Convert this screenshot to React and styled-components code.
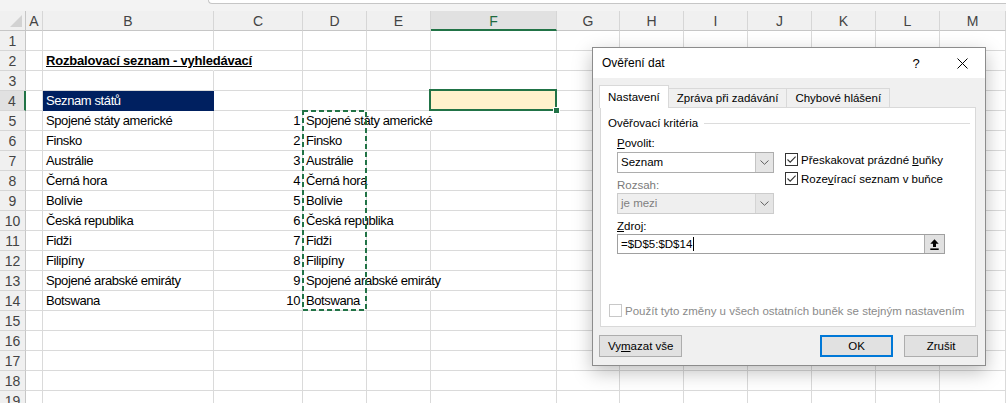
import React from 'react'
import styled, { createGlobalStyle } from 'styled-components'

const widths = [26, 17, 171, 89, 64, 64, 126, 63, 64, 64, 64, 64, 64, 66]
const letters = ['A', 'B', 'C', 'D', 'E', 'F', 'G', 'H', 'I', 'J', 'K', 'L', 'M']

const countries = [
  'Spojené státy americké',
  'Finsko',
  'Austrálie',
  'Černá hora',
  'Bolívie',
  'Česká republika',
  'Fidži',
  'Filipíny',
  'Spojené arabské emiráty',
  'Botswana',
]

// how many gridlines the text in column D runs across
const overD = [2, 0, 0, 1, 0, 1, 0, 0, 2, 0]

const GlobalStyle = createGlobalStyle`
  html, body {
    margin: 0;
    padding: 0;
    background: #ffffff;
    overflow: hidden;
  }
  body {
    font-family: "Liberation Sans", Arial, sans-serif;
  }
`

const Screen = styled.div`
  position: relative;
  width: 1006px;
  height: 403px;
  overflow: hidden;
  background: #fff;
`

const TopStrip = styled.div`
  display: flex;
  height: 11px;
  background: #f3f3f3;
`

const FormulaEdge = styled.div`
  flex: 1;
  margin-left: 208px;
  height: 3px;
  background: #fff;
  border-left: 1px solid #c6c6c6;
  border-bottom: 1px solid #c6c6c6;
  border-bottom-left-radius: 5px;
`

const Sheet = styled.div`
  display: grid;
  grid-template-columns: ${widths.map(w => `${w}px`).join(' ')};
  grid-auto-rows: 20px;
  font-family: "Liberation Sans", Arial, sans-serif;
  font-size: 13px;
  letter-spacing: -0.4px;
`

const Corner = styled.div`
  position: relative;
  box-sizing: border-box;
  background: #f0f0f0;
  border-right: 1px solid #c6c6c6;
  border-bottom: 1px solid #c6c6c6;

  &::after {
    content: '';
    position: absolute;
    right: 3px;
    bottom: 3px;
    border-style: solid;
    border-width: 0 0 12px 12px;
    border-color: transparent transparent #d2d2d2 transparent;
  }
`

const ColHead = styled.div`
  box-sizing: border-box;
  display: flex;
  align-items: center;
  justify-content: center;
  padding-top: 1px;
  font-size: 14px;
  letter-spacing: 0;
  background: ${p => (p.$active ? '#e1e1e1' : '#f0f0f0')};
  color: ${p => (p.$active ? '#1e6b3f' : '#444')};
  border-right: 1px solid #d6d6d6;
  border-bottom: ${p => (p.$active ? '2px solid #217346' : '1px solid #c6c6c6')};
`

const RowHead = styled.div`
  box-sizing: border-box;
  display: flex;
  align-items: center;
  justify-content: center;
  font-size: 14px;
  letter-spacing: 0;
  background: ${p => (p.$active ? '#e1e1e1' : '#f0f0f0')};
  color: #444;
  border-bottom: 1px solid #d6d6d6;
  border-right: ${p => (p.$active ? '2px solid #217346' : '1px solid #c6c6c6')};
`

const Cell = styled.div`
  position: relative;
  box-sizing: border-box;
  padding: 0 ${p => (p.$align === 'right' ? '2px' : '3px')};
  background: ${p => p.$fill || 'transparent'};
  color: ${p => p.$ink || '#000'};
  border-right: 1px solid ${p => p.$fill || (p.$open ? 'transparent' : '#dadada')};
  border-bottom: 1px solid ${p => p.$fill || '#dadada'};
  text-align: ${p => p.$align || 'left'};
  line-height: 20px;
  white-space: nowrap;
`

const SheetTitle = styled.span`
  font-weight: 700;
  letter-spacing: -0.2px;
  text-decoration: underline;
`

const ActiveFrame = styled.div`
  position: absolute;
  left: -2px;
  top: -2px;
  width: 128px;
  height: 22px;
  box-sizing: border-box;
  border: 2px solid #217346;
  z-index: 2;
`

const FillHandle = styled.span`
  position: absolute;
  right: -5px;
  bottom: -5px;
  width: 5px;
  height: 5px;
  background: #217346;
  border: 1px solid #fff;
`

const Ants = styled.svg`
  position: absolute;
  left: -1px;
  top: -1px;
  z-index: 2;
  overflow: visible;
`

/* ---------- dialog ---------- */

const Dialog = styled.div`
  position: absolute;
  left: 592px;
  top: 47px;
  z-index: 10;
  width: 394px;
  height: 319px;
  box-sizing: border-box;
  display: flex;
  flex-direction: column;
  border: 1px solid #8c8c8c;
  background: #f0f0f0;
  box-shadow: 0 6px 18px rgba(0, 0, 0, 0.25);
  font-family: "Liberation Sans", Arial, sans-serif;
  font-size: 11.5px;
  color: #000;
`

const TitleBar = styled.div`
  display: flex;
  align-items: center;
  height: 30px;
  padding-left: 9px;
  background: #fff;
  font-size: 12px;
`

const TitleText = styled.span`
  flex: 1;
`

const TitleButton = styled.span`
  width: 46px;
  height: 30px;
  display: flex;
  align-items: center;
  justify-content: center;
  font-size: 13px;
`

const Body = styled.div`
  flex: 1;
  padding: 7px 9px 0 7px;
  display: flex;
  flex-direction: column;
`

const TabStrip = styled.div`
  display: flex;
  align-items: flex-end;
  height: 22px;
`

const Tab = styled.div`
  position: relative;
  z-index: ${p => (p.$active ? 1 : 0)};
  box-sizing: border-box;
  height: ${p => (p.$active ? '23px' : '19px')};
  margin-bottom: ${p => (p.$active ? '-1px' : '0')};
  margin-left: ${p => (p.$active ? '-1px' : '0')};
  padding: 0 8px;
  display: flex;
  align-items: center;
  background: ${p => (p.$active ? '#fff' : '#f0f0f0')};
  border: 1px solid #d9d9d9;
  border-bottom: 0;
  ${p => (p.$active ? '' : 'border-left: 0;')}
  white-space: nowrap;
`

const Panel = styled.div`
  box-sizing: border-box;
  height: 220px;
  flex: none;
  display: flex;
  flex-direction: column;
  padding-bottom: 9px;
  background: #fff;
  border: 1px solid #d9d9d9;
`

const GroupHead = styled.div`
  display: flex;
  align-items: center;
  height: 14px;
  margin: 8px 5px 0 7px;
  gap: 6px;
  white-space: nowrap;

  &::after {
    content: '';
    flex: 1;
    height: 1px;
    background: #dcdcdc;
  }
`

const FormRow = styled.div`
  display: flex;
  margin-top: 6px;
  padding-left: 16px;
`

const LeftCol = styled.div`
  width: 157px;
  display: flex;
  flex-direction: column;
`

const RightCol = styled.div`
  margin-left: 11px;
  padding-top: 17px;
  display: flex;
  flex-direction: column;
  gap: 6px;
`

const FieldLabel = styled.div`
  height: 14px;
  line-height: 14px;
  margin-top: ${p => p.$gap || 0}px;
  padding-left: ${p => p.$indent || 0}px;
  color: ${p => (p.$disabled ? '#7a7a7a' : '#000')};
`

const U = styled.span`
  text-decoration: underline;
`

const Select = styled.div`
  box-sizing: border-box;
  display: flex;
  height: 21px;
  margin-top: ${p => p.$gap || 0}px;
  border: 1px solid ${p => (p.$disabled ? '#cccccc' : '#adadad')};
  background: ${p => (p.$disabled ? '#efefef' : '#fff')};
  color: ${p => (p.$disabled ? '#7f7f7f' : '#000')};
`

const SelectValue = styled.span`
  flex: 1;
  padding-left: 3px;
  line-height: 19px;
`

const SelectArrow = styled.span`
  width: 17px;
  display: flex;
  align-items: center;
  justify-content: center;
  background: #e5e5e5;
  border-left: 1px solid ${p => (p.$disabled ? '#d4d4d4' : '#c4c4c4')};
`

const CheckRow = styled.label`
  display: flex;
  align-items: center;
  gap: 3px;
  height: 13px;
  white-space: nowrap;
  color: ${p => (p.$disabled ? '#8a8a8a' : '#000')};
`

const Box = styled.span`
  flex: none;
  width: 13px;
  height: 13px;
  box-sizing: border-box;
  display: flex;
  align-items: center;
  justify-content: center;
  background: #fff;
  border: 1px solid ${p => (p.$disabled ? '#c8c8c8' : '#333')};
`

const SourceInput = styled.div`
  box-sizing: border-box;
  display: flex;
  width: 328px;
  height: 20px;
  margin: 1px 0 0 16px;
  border: 1px solid #a0a0a0;
  background: #fff;
`

const SourceText = styled.span`
  flex: 1;
  display: flex;
  align-items: center;
  padding-left: 3px;
`

const Caret = styled.span`
  width: 1px;
  height: 14px;
  margin-left: 1px;
  background: #000;
`

const RefButton = styled.span`
  width: 19px;
  display: flex;
  align-items: center;
  justify-content: center;
  background: #e1e1e1;
  border-left: 1px solid #adadad;
`

const BottomCheck = styled(CheckRow)`
  margin: auto 0 0 8px;
`

const ButtonRow = styled.div`
  display: flex;
  justify-content: space-between;
  margin: 8px -2px 0 -1px;
`

const ButtonGroup = styled.div`
  display: flex;
  gap: 11px;
`

const Button = styled.button`
  box-sizing: border-box;
  height: 22px;
  min-width: ${p => p.$w || 73}px;
  padding: 0 8px;
  font: inherit;
  color: #000;
  background: #e1e1e1;
  border: ${p => (p.$primary ? '2px solid #0078d7' : '1px solid #adadad')};
`

const Check = () => (
  <svg width="11" height="11" viewBox="0 0 11 11">
    <polyline points="1.5,5.5 4.2,8.2 9.6,2.6" fill="none" stroke="#333" strokeWidth="1.1" />
  </svg>
)

const Chevron = () => (
  <svg width="9" height="5" viewBox="0 0 9 5">
    <polyline points="0.5,0.5 4.5,4.3 8.5,0.5" fill="none" stroke="#606060" strokeWidth="1" />
  </svg>
)

const RefArrow = () => (
  <svg width="9" height="11" viewBox="0 0 9 11">
    <path d="M4.5 0.3 L8.7 4.8 H6 V8 H3 V4.8 H0.3 Z" fill="#000" />
    <rect x="0.3" y="9.4" width="8.4" height="1.6" fill="#000" />
  </svg>
)

const CloseIcon = () => (
  <svg width="11" height="11" viewBox="0 0 11 11">
    <path d="M0.5 0.5 L10.5 10.5 M10.5 0.5 L0.5 10.5" stroke="#000" strokeWidth="1" />
  </svg>
)

const renderCell = (r, l) => {
  const key = `${l}${r}`
  if (r === 2 && l === 'B') {
    return (
      <Cell key={key} $open>
        <SheetTitle>Rozbalovací seznam - vyhledávací</SheetTitle>
      </Cell>
    )
  }
  if (r === 4 && l === 'B') {
    return <Cell key={key} $fill="#002060" $ink="#fff">Seznam států</Cell>
  }
  if (r === 4 && l === 'F') {
    return (
      <Cell key={key} $fill="#fff2cc">
        <ActiveFrame>
          <FillHandle />
        </ActiveFrame>
      </Cell>
    )
  }
  if (r >= 5 && r <= 14) {
    const i = r - 5
    if (l === 'B') return <Cell key={key}>{countries[i]}</Cell>
    if (l === 'C') return <Cell key={key} $align="right">{i + 1}</Cell>
    if (l === 'D') {
      return (
        <Cell key={key} $open={overD[i] > 0}>
          {countries[i]}
          {i === 0 && (
            <Ants width="65" height="201">
              <rect x="1" y="1" width="63" height="199" fill="none" stroke="#217346" strokeWidth="2" strokeDasharray="5 3" />
            </Ants>
          )}
        </Cell>
      )
    }
    if (l === 'E') return <Cell key={key} $open={overD[i] > 1} />
  }
  return <Cell key={key} />
}

const App = () => {
  const rows = Array.from({ length: 19 }, (_, i) => i + 1)

  return (
    <Screen>
      <GlobalStyle />
      <TopStrip>
        <FormulaEdge />
      </TopStrip>
      <Sheet>
        <Corner />
        {letters.map(l => (
          <ColHead key={l} $active={l === 'F'}>{l}</ColHead>
        ))}
        {rows.map(r => (
          <React.Fragment key={r}>
            <RowHead $active={r === 4}>{r}</RowHead>
            {letters.map(l => renderCell(r, l))}
          </React.Fragment>
        ))}
      </Sheet>

      <Dialog>
        <TitleBar>
          <TitleText>Ověření dat</TitleText>
          <TitleButton>?</TitleButton>
          <TitleButton><CloseIcon /></TitleButton>
        </TitleBar>
        <Body>
          <TabStrip>
            <Tab $active>Nastavení</Tab>
            <Tab>Zpráva při zadávání</Tab>
            <Tab>Chybové hlášení</Tab>
          </TabStrip>
          <Panel>
            <GroupHead>Ověřovací kritéria</GroupHead>
            <FormRow>
              <LeftCol>
                <FieldLabel><U>P</U>ovolit:</FieldLabel>
                <Select $gap={2}>
                  <SelectValue>Seznam</SelectValue>
                  <SelectArrow><Chevron /></SelectArrow>
                </Select>
                <FieldLabel $gap={5} $disabled>Rozsah:</FieldLabel>
                <Select $gap={1} $disabled>
                  <SelectValue>je mezi</SelectValue>
                  <SelectArrow $disabled><Chevron /></SelectArrow>
                </Select>
              </LeftCol>
              <RightCol>
                <CheckRow>
                  <Box><Check /></Box>
                  <span>Přeskakovat prázdné <U>b</U>uňky</span>
                </CheckRow>
                <CheckRow>
                  <Box><Check /></Box>
                  <span>Roze<U>v</U>írací seznam v buňce</span>
                </CheckRow>
              </RightCol>
            </FormRow>
            <FieldLabel $gap={5} $indent={16}><U>Z</U>droj:</FieldLabel>
            <SourceInput>
              <SourceText>=$D$5:$D$14<Caret /></SourceText>
              <RefButton><RefArrow /></RefButton>
            </SourceInput>
            <BottomCheck $disabled>
              <Box $disabled />
              <span>Použít tyto změny u všech ostatních buněk se stejným nastavením</span>
            </BottomCheck>
          </Panel>
          <ButtonRow>
            <Button $w={78}>Vy<U>m</U>azat vše</Button>
            <ButtonGroup>
              <Button $primary>OK</Button>
              <Button $w={74}>Zrušit</Button>
            </ButtonGroup>
          </ButtonRow>
        </Body>
      </Dialog>
    </Screen>
  )
}

export default App
